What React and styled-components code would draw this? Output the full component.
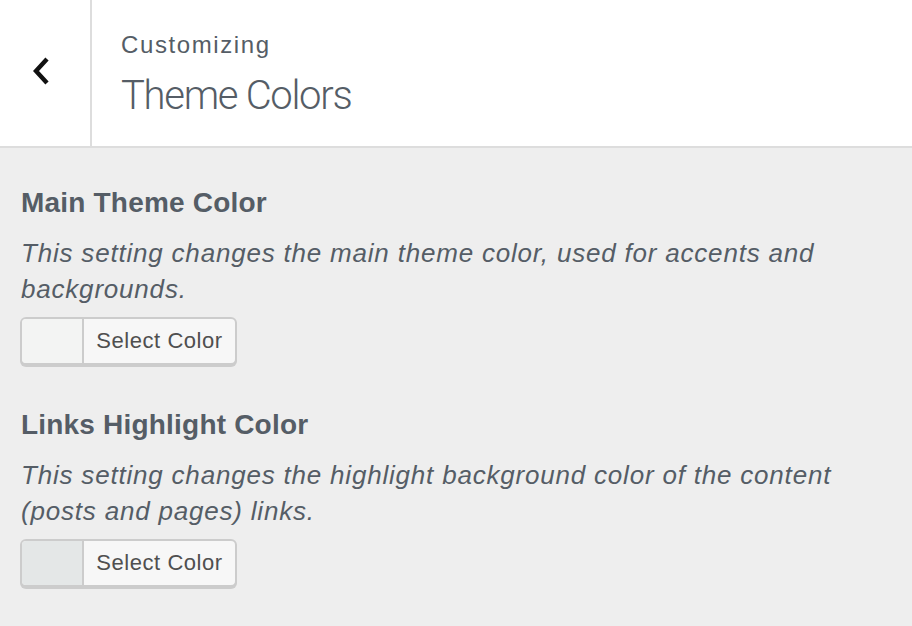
import React from "react";
import styled, { createGlobalStyle } from "styled-components";

const GlobalStyle = createGlobalStyle`
  html, body {
    margin: 0;
    padding: 0;
    background: #eeeeee;
  }
  body {
    font-family: "Liberation Sans", Arial, sans-serif;
    -webkit-font-smoothing: antialiased;
  }
`;

const sections = [
  {
    title: "Main Theme Color",
    description:
      "This setting changes the main theme color, used for accents and backgrounds.",
    swatch: "#f3f4f3",
  },
  {
    title: "Links Highlight Color",
    description:
      "This setting changes the highlight background color of the content (posts and pages) links.",
    swatch: "#e4e7e7",
  },
];

const App = () => {
  return (
    <StyledPanel>
      <GlobalStyle />
      <StyledHeader>
        <BackButton aria-label="Back">
          <svg width="22" height="30" viewBox="0 0 22 30">
            <path
              d="M16 3 L5 15 L16 27"
              fill="none"
              stroke="#111"
              strokeWidth="4.4"
              strokeLinecap="butt"
              strokeLinejoin="miter"
            />
          </svg>
        </BackButton>
        <HeaderTitle>
          <Crumb>Customizing</Crumb>
          <PanelName>Theme Colors</PanelName>
        </HeaderTitle>
      </StyledHeader>
      <Content>
        {sections.map((s) => (
          <Control key={s.title}>
            <ControlTitle>{s.title}</ControlTitle>
            <Description>{s.description}</Description>
            <ColorButton type="button">
              <Swatch color={s.swatch} />
              <ButtonLabel>Select Color</ButtonLabel>
            </ColorButton>
          </Control>
        ))}
      </Content>
    </StyledPanel>
  );
};

const StyledPanel = styled.div`
  width: 912px;
  min-height: 626px;
  background: #eeeeee;
`;

const StyledHeader = styled.div`
  display: flex;
  height: 146px;
  background: #fff;
  border-bottom: 2px solid #dddddd;
`;

const BackButton = styled.button`
  width: 92px;
  border: 0;
  border-right: 2px solid #dddddd;
  background: #fff;
  display: flex;
  align-items: center;
  justify-content: flex-start;
  padding: 0 0 4px 31px;
  box-sizing: border-box;
`;

const HeaderTitle = styled.div`
  display: flex;
  flex-direction: column;
  padding: 30px 0 0 29px;
  color: #555d66;
`;

const Crumb = styled.span`
  font-size: 24px;
  line-height: 30px;
  letter-spacing: 1.6px;
`;

const PanelName = styled.span`
  font-family: Roboto, "Liberation Sans", sans-serif;
  font-weight: 300;
  font-size: 40px;
  line-height: 48px;
  letter-spacing: -1.3px;
  margin-top: 12px;
`;

const Content = styled.div`
  padding: 39px 21px 0 21px;
  display: flex;
  flex-direction: column;
  gap: 44px;
`;

const Control = styled.div`
  display: flex;
  flex-direction: column;
  align-items: flex-start;
`;

const ControlTitle = styled.h3`
  margin: 0 0 16px;
  font-size: 28px;
  line-height: 32px;
  font-weight: bold;
  letter-spacing: 0.2px;
  color: #555d66;
`;

const Description = styled.p`
  margin: 0 0 10px;
  font-size: 26px;
  line-height: 36px;
  font-style: italic;
  letter-spacing: 0.8px;
  color: #555d66;
`;

const ColorButton = styled.button`
  display: flex;
  align-items: stretch;
  height: 48px;
  width: 217px;
  margin-left: -1px;
  padding: 0;
  border: 2px solid #cccccc;
  border-radius: 6px;
  background: #f7f7f7;
  box-shadow: 0 2px 0 #cccccc;
  overflow: hidden;
  box-sizing: border-box;
`;

const Swatch = styled.span`
  width: 60px;
  background: ${(p) => p.color};
  border-right: 2px solid #cccccc;
`;

const ButtonLabel = styled.span`
  flex: 1;
  display: flex;
  align-items: center;
  justify-content: center;
  font-family: "Liberation Sans", Arial, sans-serif;
  font-size: 22px;
  letter-spacing: 0.55px;
  color: #4f4f4f;
`;

export default App;
